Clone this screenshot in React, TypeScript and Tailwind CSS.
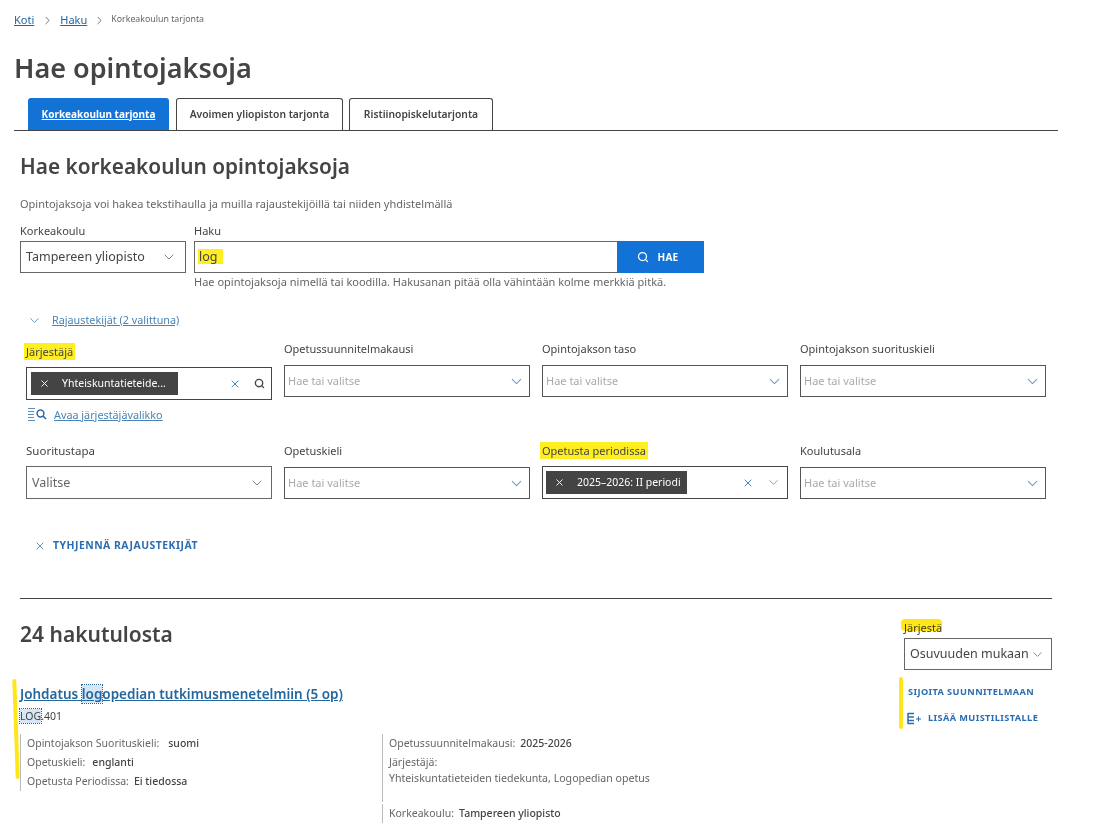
import { ChevronDown, ChevronRight, Search, X } from "lucide-react";

const font = "font-['Noto_Sans','Open_Sans',sans-serif]";

function Placeholder({ label }: { label: string }) {
    return (
        <div>
            <div className="h-[18px] text-[11px] leading-[18px] text-[#444]">{label}</div>
            <div className="mt-[7px] flex h-[32px] items-center justify-between border border-[#555] pl-[3px] pr-[4px] text-[11px] text-[#aaa]">
                <span>Hae tai valitse</span>
                <ChevronDown size={17} strokeWidth={1.5} className="text-[#6f9cc6]" />
            </div>
        </div>
    );
}

function Chip({ text, w }: { text: string; w: string }) {
    return (
        <div className={`flex h-[23px] items-center bg-[#444] pl-[8px] text-[10.5px] text-white ${w}`}>
            <X size={11} strokeWidth={2} />
            <span className="ml-[12px] whitespace-nowrap">{text}</span>
        </div>
    );
}

function Meta({ label, value, gap }: { label: string; value: string; gap?: string }) {
    return (
        <div className="flex h-[19px] items-center border-l border-[#bbb] pl-[6px] text-[10.5px] text-[#666]">
            <span>{label}</span>
            <span className={`font-medium text-[#444] ${gap ?? "ml-[5px]"}`}>{value}</span>
        </div>
    );
}

export default function App() {
    return (
        <div className={`relative h-[827px] w-[1094px] overflow-hidden bg-white ${font}`}>
            <div className="pl-[14px] pr-[36px]">
                <nav className="flex h-[40px] items-center text-[11px] text-[#333]">
                    <a className="text-[#23679f] underline">Koti</a>
                    <ChevronRight size={13} strokeWidth={1.5} className="ml-[7px] mr-[6px] text-[#555]" />
                    <a className="text-[#23679f] underline">Haku</a>
                    <ChevronRight size={13} strokeWidth={1.5} className="ml-[6px] mr-[5px] text-[#555]" />
                    <span className="text-[8.8px] text-[#666]">Korkeakoulun tarjonta</span>
                </nav>
                <h1 className="mt-[10px] h-[48px] text-[27px] font-semibold leading-[36px] text-[#444]">Hae opintojaksoja</h1>

                <div className="flex gap-[7px] border-b border-[#444] pl-[14px]">
                    <a className="flex h-[32px] w-[141px] items-center justify-center rounded-t-[3px] bg-[#1272d6] text-[10px] font-bold text-white underline">
                        Korkeakoulun tarjonta
                    </a>
                    <a className="flex h-[32px] w-[167px] items-center justify-center rounded-t-[3px] border border-b-0 border-[#444] text-[10.3px] font-semibold text-[#444]">
                        Avoimen yliopiston tarjonta
                    </a>
                    <a className="ml-[-1px] flex h-[32px] w-[144px] items-center justify-center rounded-t-[3px] border border-b-0 border-[#444] text-[10.3px] font-semibold text-[#444]">
                        Ristiinopiskelutarjonta
                    </a>
                </div>

                <div className="pl-[6px]">
                    <h2 className="mt-[20px] h-[30px] text-[20.8px] font-semibold leading-[30px] text-[#444]">Hae korkeakoulun opintojaksoja</h2>
                    <p className="mt-[15px] h-[16px] text-[11px] leading-[16px] text-[#666]">
                        Opintojaksoja voi hakea tekstihaulla ja muilla rajaustekijöillä tai niiden yhdistelmällä
                    </p>

                    <div className="mt-[11px] flex gap-[8px]">
                        <div className="w-[166px]">
                            <div className="h-[15px] text-[11px] leading-[15px] text-[#444]">Korkeakoulu</div>
                            <div className="mt-[3px] flex h-[32px] items-center justify-between border border-[#666] pl-[5px] pr-[8px] text-[12.5px] text-[#444]">
                                <span>Tampereen yliopisto</span>
                                <ChevronDown size={16} strokeWidth={1.5} className="text-[#888]" />
                            </div>
                        </div>
                        <div>
                            <div className="h-[15px] text-[11px] leading-[15px] text-[#444]">Haku</div>
                            <div className="mt-[3px] flex h-[32px] w-[510px]">
                                <div className="flex w-[423px] items-center border border-r-0 border-[#666] pb-[1px] pl-[3px] text-[12.5px] text-[#444]">
                                    <span className="bg-[#ffee22] pl-[1px] pr-[6px] leading-[15px]">log</span>
                                </div>
                                <button className="flex w-[87px] items-center justify-center gap-[8px] bg-[#1272d6] pr-[5px] text-[10px] font-bold tracking-[0.3px] text-white">
                                    <Search size={12} strokeWidth={2.5} />
                                    HAE
                                </button>
                            </div>
                            <div className="mt-[1px] text-[11px] leading-[16px] text-[#666]">
                                Hae opintojaksoja nimellä tai koodilla. Hakusanan pitää olla vähintään kolme merkkiä pitkä.
                            </div>
                        </div>
                    </div>

                    <div className="mt-[22px] flex h-[16px] items-center pl-[7px] text-[10.8px]">
                        <ChevronDown size={15} strokeWidth={1.5} className="text-[#5b8fc0]" />
                        <a className="ml-[10px] text-[#4a83b5] underline">Rajaustekijät (2 valittuna)</a>
                    </div>

                    <div className="ml-[6px] mt-[12px] grid w-[1020px] grid-cols-4 gap-x-[12px]">
                        <div className="pt-[3px]">
                            <div className="h-[18px] text-[11px] leading-[18px] text-[#444]">
                                <span className="ml-[-2px] bg-[#ffee22] px-[2px] py-[1px]">Järjestäjä</span>
                            </div>
                            <div className="mt-[6px] flex h-[33px] items-center justify-between border border-[#444] pl-[4px] pr-[6px]">
                                <Chip text="Yhteiskuntatieteide..." w="w-[147px]" />
                                <div className="flex items-center gap-[13px]">
                                    <X size={12} strokeWidth={1.75} className="text-[#2a73b0]" />
                                    <Search size={11} strokeWidth={3} className="text-[#444]" />
                                </div>
                            </div>
                            <div className="mt-[6px] flex h-[18px] items-center text-[10.8px]">
                                <svg width="20" height="16" viewBox="0 0 20 16" className="ml-[2px]" fill="none" stroke="#5b8fc0" strokeWidth="1">
                                    <path d="M0 1.500h7M0 4.500h6M0 7.500h6M0 10.500h6M0 13.500h7" />
                                    <circle cx="12.500" cy="6.500" r="3.400" stroke="#2a6aa8" strokeWidth="1.500" />
                                    <path d="M15 9l3 3" stroke="#2a6aa8" strokeWidth="1.600" />
                                </svg>
                                <a className="ml-[6px] text-[#4a83b5] underline">Avaa järjestäjävalikko</a>
                            </div>
                        </div>
                        <Placeholder label="Opetussuunnitelmakausi" />
                        <Placeholder label="Opintojakson taso" />
                        <Placeholder label="Opintojakson suorituskieli" />

                        <div className="mt-[18px]">
                            <div className="h-[18px] text-[11.5px] leading-[18px] text-[#444]">Suoritustapa</div>
                            <div className="mt-[6px] flex h-[33px] items-center justify-between border border-[#666] pl-[5px] pr-[6px] text-[12.5px] text-[#666]">
                                <span className="pt-[2px]">Valitse</span>
                                <ChevronDown size={16} strokeWidth={1.5} className="text-[#888]" />
                            </div>
                        </div>
                        <div className="mt-[18px]">
                            <Placeholder label="Opetuskieli" />
                        </div>
                        <div className="mt-[18px]">
                            <div className="h-[18px] text-[11px] leading-[18px] text-[#444]">
                                <span className="ml-[-2px] bg-[#ffee22] px-[2px] py-[1px]">Opetusta periodissa</span>
                            </div>
                            <div className="mt-[6px] flex h-[33px] items-center justify-between border border-[#444] pl-[3px] pr-[6px]">
                                <Chip text="2025–2026: II periodi" w="w-[141px]" />
                                <div className="flex items-center gap-[12px]">
                                    <X size={12} strokeWidth={1.75} className="text-[#2a73b0]" />
                                    <ChevronDown size={15} strokeWidth={1.5} className="text-[#6f9cc6]" />
                                </div>
                            </div>
                        </div>
                        <div className="mt-[18px]">
                            <Placeholder label="Koulutusala" />
                        </div>
                    </div>

                    <div className="mt-[38px] flex h-[18px] items-center pl-[14px] text-[10.4px] font-bold tracking-[0.5px] text-[#2a6db0]">
                        <X size={12} strokeWidth={1.5} />
                        <span className="ml-[7px]">TYHJENNÄ RAJAUSTEKIJÄT</span>
                    </div>

                    <div className="mt-[43px] w-[1032px] border-t border-[#444]" />

                    <div className="flex w-[1032px] justify-between">
                        <div className="min-w-0">
                            <h2 className="mt-[19px] h-[32px] text-[21px] font-semibold leading-[32px] text-[#444]">24 hakutulosta</h2>
                            <a className="mt-[32px] block h-[24px] text-[13.5px] font-semibold leading-[24px] text-[#23679f] underline">
                                Johdatus <span className="bg-[#d6e6f5] outline-1 outline-dotted outline-[#23679f]">log</span>opedian tutkimusmenetelmiin (5 op)
                            </a>
                            <div className="mt-[1px] h-[18px] text-[10.5px] leading-[18px] text-[#444]">
                                <span className="bg-[#d6e6f5] outline-1 outline-dotted outline-[#23679f]">LOG</span>.401
                            </div>
                        </div>
                        <div className="w-[148px]">
                            <div className="mt-[22px] h-[14px] text-[11px] leading-[14px] text-[#444]">Järjestä</div>
                            <div className="mt-[3px] flex h-[32px] items-center justify-between border border-[#666] pl-[5px] pr-[6px] text-[12.5px] text-[#444]">
                                <span className="whitespace-nowrap">Osuvuuden mukaan</span>
                                <ChevronDown size={15} strokeWidth={1.5} className="text-[#888]" />
                            </div>
                            <div className="mt-[13px] h-[18px] pl-[4px] text-[9.2px] font-bold leading-[18px] tracking-[0.4px] text-[#2a6db0]">SIJOITA SUUNNITELMAAN</div>
                            <div className="mt-[8px] flex h-[18px] items-center pl-[3px] text-[9.2px] font-bold tracking-[0.4px] text-[#2a6db0]">
                                <svg width="14" height="13" viewBox="0 0 14 13" fill="none" stroke="#2a6db0" strokeWidth="1.500">
                                    <path d="M1 1v11M1 1.500h6M1 5h6M1 8.500h6M1 11.500h6" />
                                    <path d="M9 7h5M11.500 4.500v5" strokeWidth="1" />
                                </svg>
                                <span className="ml-[7px]">LISÄÄ MUISTILISTALLE</span>
                            </div>
                        </div>
                    </div>

                    <div className="mt-[7px] flex">
                        <div className="w-[362px]">
                            <Meta label="Opintojakson Suorituskieli:" value="suomi" gap="ml-[9px]" />
                            <Meta label="Opetuskieli:" value="englanti" gap="ml-[7px]" />
                            <Meta label="Opetusta Periodissa:" value="Ei tiedossa" />
                        </div>
                        <div>
                            <Meta label="Opetussuunnitelmakausi:" value="2025-2026" />
                            <div className="h-[49px] border-l border-[#bbb] pl-[6px] pt-[1px] text-[10.6px] leading-[16px] text-[#666]">
                                Järjestäjä:
                                <br />
                                Yhteiskuntatieteiden tiedekunta, Logopedian opetus
                            </div>
                            <div className="mt-[2px]">
                                <Meta label="Korkeakoulu:" value="Tampereen yliopisto" />
                            </div>
                        </div>
                    </div>
                </div>
            </div>

            {/* marker strokes on top of the screenshot */}
            <div className="absolute left-[14px] top-[679px] h-[100px] w-[4px] -rotate-2 rounded-full bg-[#ffe61a]" />
            <div className="absolute left-[899px] top-[677px] h-[52px] w-[4px] rounded-full bg-[#ffe61a]" />
            <div className="absolute left-[901px] top-[619px] h-[12px] w-[41px] rounded-sm bg-[#ffe61a] mix-blend-multiply" />
        </div>
    );
}
